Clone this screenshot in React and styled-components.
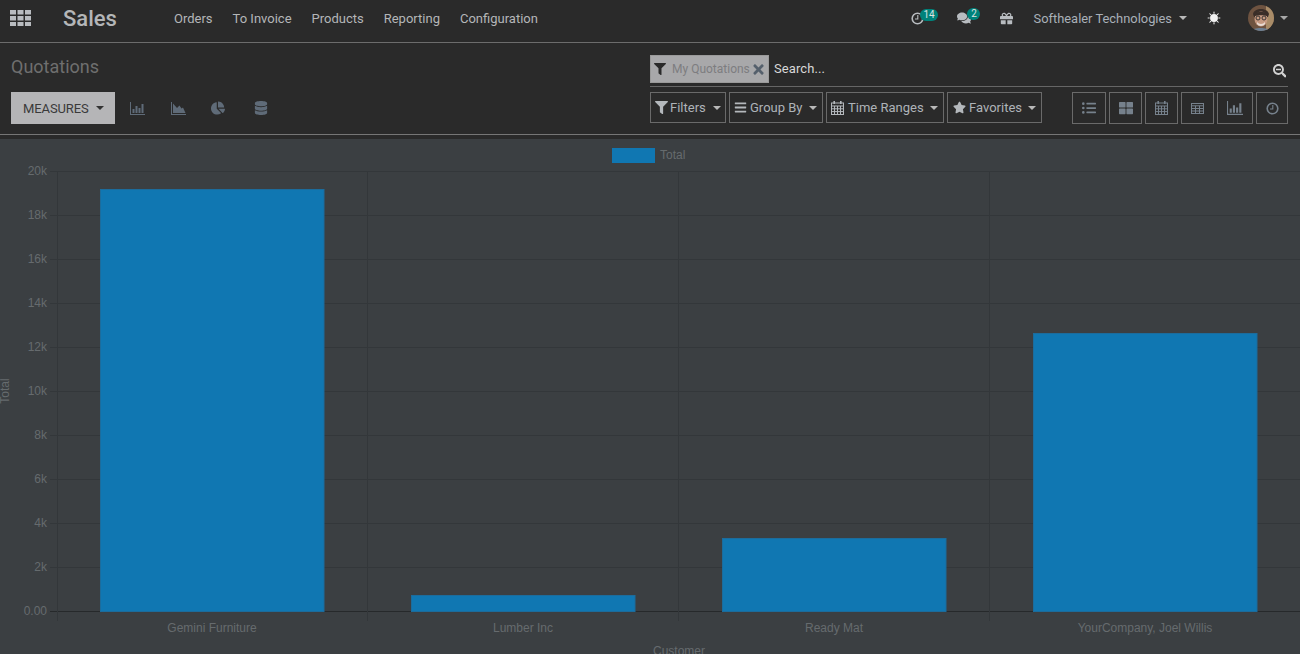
import React from "react";
import styled, { createGlobalStyle } from "styled-components";
import { FaChartPie, FaDatabase, FaFilter, FaBars, FaStar, FaListUl, FaThLarge, FaTimes, FaSearchMinus, FaGift, FaComments } from "react-icons/fa";

const GlobalStyle = createGlobalStyle`
  html, body { margin: 0; padding: 0; height: 100%; background: #2a2a2a; overflow: hidden; }
  body { font-family: Roboto, "Liberation Sans", sans-serif; font-size: 13px; }
`;

const Page = styled.div`
  width: 1300px;
  height: 654px;
  display: flex;
  flex-direction: column;
  overflow: hidden;
  background: #2a2a2a;
`;

const Navbar = styled.header`
  height: 43px;
  flex: none;
  display: flex;
  align-items: center;
  box-sizing: border-box;
  padding-bottom: 6px;
  border-bottom: 1px solid #6c6c6c;
  color: #b9b9b9;
`;

const AppsButton = styled.div`
  width: 63px;
  padding: 0 0 1px 10px;
  box-sizing: border-box;
  color: #b9bcc0;
  svg { display: block; }
`;

const Brand = styled.div`
  width: 111px;
  font-size: 22px;
  font-weight: 500;
  color: #b4b6b8;
`;

const MainMenu = styled.nav`
  display: flex;
  gap: 20px;
`;

const MenuItem = styled.span`
  font-size: 13px;
  color: #b4b6b8;
`;

const Systray = styled.div`
  margin-left: auto;
  display: flex;
  align-items: center;
  padding-right: 12px;
`;

const TrayIcon = styled.span`
  position: relative;
  display: flex;
  align-items: center;
  margin-left: ${(p) => p.$left}px;
  font-size: ${(p) => p.$size || 13}px;
  color: #b8bcc0;
`;

const Badge = styled.span`
  position: absolute;
  left: ${(p) => p.$x}px;
  top: -3px;
  height: 12px;
  min-width: 7px;
  padding: 0 3px;
  border-radius: 7px;
  background: #00827a;
  color: #dfe3e3;
  font-size: 10px;
  line-height: 12px;
  text-align: center;
`;

const Company = styled.span`
  margin-left: 20px;
  color: #a9b0b8;
  font-size: 12.9px;
`;

const Caret = styled.span`
  display: inline-block;
  margin-left: ${(p) => p.$left ?? 7}px;
  border-top: 4px solid ${(p) => p.$color || "#b9b9b9"};
  border-left: 4px solid transparent;
  border-right: 4px solid transparent;
`;

const Avatar = styled.svg`
  display: block;
  margin-left: 27px;
  border-radius: 50%;
`;

const ControlPanel = styled.section`
  height: 92px;
  flex: none;
  display: flex;
  justify-content: space-between;
  box-sizing: border-box;
  padding: 12px 12px 0 11px;
  border-bottom: 1px solid #767676;
`;

const LeftColumn = styled.div`
  display: flex;
  flex-direction: column;
`;

const Title = styled.h1`
  margin: 0;
  height: 37px;
  font-size: 18px;
  line-height: 23px;
  font-weight: 400;
  color: #6f6f6f;
`;

const ButtonRow = styled.div`
  display: flex;
  align-items: center;
`;

const MeasuresButton = styled.div`
  width: 104px;
  height: 32px;
  display: flex;
  align-items: center;
  box-sizing: border-box;
  padding-left: 12px;
  background: #b5b5b7;
  color: #3a3a3a;
  font-size: 13px;
  letter-spacing: -0.1px;
`;

const ModeIcon = styled.span`
  display: flex;
  justify-content: center;
  width: ${(p) => p.$width}px;
  font-size: 14px;
  color: #5f6b78;
`;

const RightColumn = styled.div`
  width: 638px;
  display: flex;
  flex-direction: column;
`;

const SearchBox = styled.div`
  height: 32px;
  display: flex;
  align-items: flex-start;
  box-sizing: border-box;
  border-bottom: 1px solid #666;
`;

const Facet = styled.div`
  width: 119px;
  height: 28px;
  flex: none;
  display: flex;
  align-items: center;
  box-sizing: border-box;
  padding-left: 3px;
  background: #a8a8aa;
  border: 1px solid #9a9a9a;
  color: #7d7d80;
  font-size: 12px;
  svg:first-child { color: #2a2a2a; font-size: 12px; margin-right: 6px; }
  svg:last-child { color: #55606c; font-size: 15px; margin-left: 1px; }
`;

const SearchText = styled.span`
  margin-left: 5px;
  line-height: 27px;
  color: #d8d8d8;
  font-size: 13px;
  letter-spacing: 0.1px;
`;

const SearchIcon = styled.span`
  margin-left: auto;
  display: flex;
  padding: 9px 2px 0 0;
  font-size: 13.5px;
  color: #d2d2d2;
`;

const BottomRow = styled.div`
  display: flex;
  justify-content: space-between;
  margin-top: 5px;
`;

const Group = styled.div`
  display: flex;
  gap: 3px;
`;

const FilterButton = styled.div`
  width: ${(p) => p.$width}px;
  height: 31px;
  display: flex;
  align-items: center;
  box-sizing: border-box;
  padding-left: ${(p) => p.$pad || 4}px;
  border: 1px solid #6a6a6a;
  color: #aeb3b8;
  font-size: 13px;
  svg:first-child { margin-right: ${(p) => p.$iconGap || 3}px; font-size: 13px; color: #b4b8bc; }
`;

const ViewButton = styled.div`
  width: ${(p) => p.$width}px;
  height: 32px;
  display: flex;
  align-items: center;
  justify-content: center;
  box-sizing: border-box;
  border: 1px solid #6a6a6a;
  color: #76818c;
  font-size: 14px;
`;

const ChartArea = styled.main`
  flex: 1;
  margin-top: 4px;
  background: #3b3f42;
  min-height: 0;
`;

const ChartSvg = styled.svg`
  display: block;
  font-family: "Liberation Sans", Arial, sans-serif;
  font-size: 12px;
`;

function AppsIcon() {
  const cells = [];
  for (let r = 0; r < 3; r++) {
    for (let c = 0; c < 3; c++) {
      cells.push(<rect key={`${r}${c}`} x={c * 7.5} y={r * 6} width="6" height="4.5" />);
    }
  }
  return <svg width="21" height="16" viewBox="0 0 21 16" fill="currentColor">{cells}</svg>;
}

function BarsIcon({ size = 15 }) {
  return (
    <svg width={size} height={size} viewBox="0 0 15 15" fill="currentColor">
      <path d="M0 1h1v12h14v1H0z" />
      <path d="M2.500 8h2v4h-2zM5.500 5h2v7h-2zM8.500 7h2v5h-2zM11.500 3h2v9h-2z" />
    </svg>
  );
}

function AreaIcon() {
  return (
    <svg width="15" height="15" viewBox="0 0 15 15" fill="currentColor">
      <path d="M0 1h1v12h14v1H0z" />
      <path d="M2 12V2.500l4 4.500 2.500-2.500 2 3 1.500-1 2.500 5.500z" />
    </svg>
  );
}

function CalendarIcon({ size = 13 }) {
  return (
    <svg width={size} height={size + 1} viewBox="0 0 13 14" fill="none" stroke="currentColor" strokeWidth="1">
      <rect x="0.5" y="2" width="12" height="11.5" />
      <path d="M0.5 5h12M0.5 7.800h12M0.5 10.600h12M3.500 5v8.500M6.500 5v8.500M9.500 5v8.500" />
      <path d="M3.200 0v3M9.800 0v3" strokeWidth="1.6" />
    </svg>
  );
}

function TableIcon() {
  return (
    <svg width="13" height="11" viewBox="0 0 13 11" fill="none" stroke="currentColor" strokeWidth="1">
      <rect x="0.5" y="0.5" width="12" height="10" />
      <path d="M0.5 2.800h12M0.5 5.500h12M0.5 8h12M4.500 2.800v7.700M8.500 2.800v7.700" />
    </svg>
  );
}

function ClockIcon({ size = 13 }) {
  return (
    <svg width={size} height={size} viewBox="0 0 13 13" fill="none" stroke="currentColor">
      <circle cx="6.5" cy="6.5" r="5.3" strokeWidth="1.6" />
      <path d="M6.800 3v4H4" strokeWidth="1.1" />
    </svg>
  );
}

function SunIcon() {
  const rays = [0, 45, 90, 135, 180, 225, 270, 315];
  return (
    <svg width="14" height="14" viewBox="0 0 15 15" fill="#f2f2f2">
      <circle cx="7.5" cy="7.5" r="4.2" />
      {rays.map((a) => (
        <path key={a} d="M6.600 2.600 7.500 0l.9 2.600z" transform={`rotate(${a} 7.5 7.5)`} />
      ))}
    </svg>
  );
}

const chartTop = 32;
const chartBottom = 472;
const yTicks = ["0.00", "2k", "4k", "6k", "8k", "10k", "12k", "14k", "16k", "18k", "20k"];
const gridX = [57, 367, 678, 989];
const bars = [
  { label: "Gemini Furniture", x: 100, top: 50 },
  { label: "Lumber Inc", x: 411, top: 456 },
  { label: "Ready Mat", x: 722, top: 399 },
  { label: "YourCompany, Joel Willis", x: 1033, top: 194 },
];

function Chart() {
  return (
    <ChartSvg width="1300" height="515" viewBox="0 0 1300 515">
      <rect x="612" y="9" width="43" height="15" fill="#1077b2" />
      <text x="660" y="20" fill="#666b6e">Total</text>
      {yTicks.map((t, i) => {
        const y = chartBottom - i * 44;
        return (
          <g key={t}>
            <line x1="50" x2="1300" y1={y + 0.5} y2={y + 0.5} stroke={i === 0 ? "#26292b" : "#33373a"} />
            <text x="47" y={y + 4} textAnchor="end" fill="#666b6e">{t}</text>
          </g>
        );
      })}
      {gridX.map((x) => (
        <line key={x} x1={x + 0.5} x2={x + 0.5} y1={chartTop} y2={chartBottom + 10} stroke="#33373a" />
      ))}
      {bars.map((b) => (
        <g key={b.label}>
          <rect x={b.x + 0.5} y={b.top + 0.5} width="223.5" height={chartBottom - b.top} fill="#1077b2" stroke="#1c6c9c" />
          <text x={b.x + 112} y="493" textAnchor="middle" fill="#666b6e">{b.label}</text>
        </g>
      ))}
      <text x="679" y="516" textAnchor="middle" fill="#666b6e">Customer</text>
      <text transform="translate(9 252) rotate(-90)" textAnchor="middle" fill="#666b6e">Total</text>
    </ChartSvg>
  );
}

export default function App() {
  return (
    <Page>
      <GlobalStyle />
      <Navbar>
        <AppsButton><AppsIcon /></AppsButton>
        <Brand>Sales</Brand>
        <MainMenu>
          {["Orders", "To Invoice", "Products", "Reporting", "Configuration"].map((m) => (
            <MenuItem key={m}>{m}</MenuItem>
          ))}
        </MainMenu>
        <Systray>
          <TrayIcon $left={0}><ClockIcon /><Badge $x={9}>14</Badge></TrayIcon>
          <TrayIcon $left={33} $size={14}><FaComments /><Badge $x={10}>2</Badge></TrayIcon>
          <TrayIcon $left={29} $size={13}><FaGift /></TrayIcon>
          <Company>Softhealer Technologies</Company>
          <Caret $left={7} />
          <TrayIcon $left={20}><SunIcon /></TrayIcon>
          <Avatar width="26" height="26" viewBox="0 0 26 26">
            <rect width="26" height="26" fill="#6e5340" />
            <rect x="18" width="8" height="26" fill="#a98c68" />
            <path d="M5 9c1-6 14-7 16 0l-1 3H6z" fill="#3a2e28" />
            <ellipse cx="13" cy="14" rx="6.5" ry="7.5" fill="#c69a82" />
            <path d="M6 9c3-3 11-3 14 0l-1 2c-3-1-9-1-12 0z" fill="#3a2e28" />
            <circle cx="10" cy="13" r="2" fill="none" stroke="#3a3634" />
            <circle cx="16" cy="13" r="2" fill="none" stroke="#3a3634" />
            <path d="M9 17c2 2.500 6 2.500 8 0l0 2c-2 2.500-6 2.500-8 0z" fill="#e8dcd4" />
            <path d="M3 26c2-4 17-4 20 0z" fill="#6d7f92" />
          </Avatar>
          <Caret $left={6} $color="#a8a8a8" />
        </Systray>
      </Navbar>
      <ControlPanel>
        <LeftColumn>
          <Title>Quotations</Title>
          <ButtonRow>
            <MeasuresButton>MEASURES<Caret $left={7} $color="#333" /></MeasuresButton>
            <ModeIcon $width={45}><BarsIcon /></ModeIcon>
            <ModeIcon $width={36}><AreaIcon /></ModeIcon>
            <ModeIcon $width={44}><FaChartPie /></ModeIcon>
            <ModeIcon $width={42}><FaDatabase /></ModeIcon>
          </ButtonRow>
        </LeftColumn>
        <RightColumn>
          <SearchBox>
            <Facet><FaFilter />My Quotations<FaTimes /></Facet>
            <SearchText>Search...</SearchText>
            <SearchIcon><FaSearchMinus /></SearchIcon>
          </SearchBox>
          <BottomRow>
            <Group>
              <FilterButton $width={76} $iconGap={2}><FaFilter />Filters<Caret /></FilterButton>
              <FilterButton $width={94}><FaBars />Group By<Caret $left={6} /></FilterButton>
              <FilterButton $width={118} $iconGap={4}><CalendarIcon />Time Ranges<Caret $left={6} /></FilterButton>
              <FilterButton $width={95} $pad={5}><FaStar />Favorites<Caret $left={6} /></FilterButton>
            </Group>
            <Group>
              <ViewButton $width={34}><FaListUl /></ViewButton>
              <ViewButton $width={33}><FaThLarge /></ViewButton>
              <ViewButton $width={33}><CalendarIcon /></ViewButton>
              <ViewButton $width={33}><TableIcon /></ViewButton>
              <ViewButton $width={36}><BarsIcon size={16} /></ViewButton>
              <ViewButton $width={32}><ClockIcon /></ViewButton>
            </Group>
          </BottomRow>
        </RightColumn>
      </ControlPanel>
      <ChartArea><Chart /></ChartArea>
    </Page>
  );
}
